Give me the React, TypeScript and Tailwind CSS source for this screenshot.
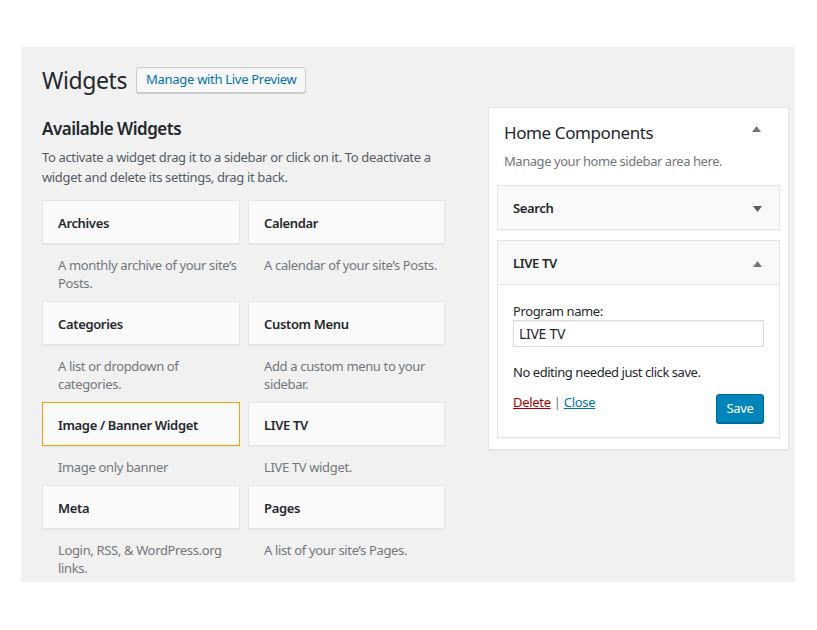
import React from "react";

const widgets: { t: string; d: string[]; active?: boolean }[] = [
  { t: "Archives", d: ["A monthly archive of your site’s", "Posts."] },
  { t: "Calendar", d: ["A calendar of your site’s Posts."] },
  { t: "Categories", d: ["A list or dropdown of", "categories."] },
  { t: "Custom Menu", d: ["Add a custom menu to your", "sidebar."] },
  { t: "Image / Banner Widget", d: ["Image only banner"], active: true },
  { t: "LIVE TV", d: ["LIVE TV widget."] },
  { t: "Meta", d: ["Login, RSS, & WordPress.org", "links."] },
  { t: "Pages", d: ["A list of your site’s Pages."] },
];

function Up() {
  return (
    <svg width="9" height="6" viewBox="0 0 9 6" className="block">
      <path d="M0 6 L4.5 0 L9 6 Z" fill="#72777c" />
    </svg>
  );
}
function Down() {
  return (
    <svg width="9" height="6" viewBox="0 0 9 6" className="block">
      <path d="M0 0 L9 0 L4.5 6 Z" fill="#555d66" />
    </svg>
  );
}

export default function App() {
  return (
    <div
      className="w-[817px] h-[630px] bg-white pt-[47px] pl-[21px] text-[#23282d]"
      style={{ fontFamily: '"Noto Sans", "Open Sans", sans-serif' }}
    >
      <div className="w-[774px] h-[535px] bg-[#f1f1f1] pl-[21px] flex gap-[43px] overflow-hidden">
        {/* left */}
        <div className="w-[403px] pt-[20px]">
          <div className="flex items-center h-[26px]">
            <h1 className="text-[23px] leading-[29px] font-normal tracking-[-0.4px]">Widgets</h1>
            <button className="ml-[9px] h-[26px] px-[9px] border border-[#cccccc] bg-[#f7f7f7] rounded-[3px] text-[13px] text-[#0073aa] tracking-[-0.3px] shadow-[0_1px_0_#cccccc]">
              Manage with Live Preview
            </button>
          </div>
          <h2 className="mt-[24px] text-[17px] leading-[24px] font-semibold tracking-[-0.5px]">Available Widgets</h2>
          <p className="mt-[6px] text-[13px] leading-[20px] text-[#555d66] tracking-[-0.35px]">
            To activate a widget drag it to a sidebar or click on it. To deactivate a widget and delete its settings, drag it back.
          </p>
          <div className="mt-[13px] grid grid-cols-[198px_197px] gap-x-[8px]">
            {widgets.map((w) => (
              <div key={w.t}>
                <div
                  className={
                    "h-[44px] flex items-center pl-[15px] pt-[4px] bg-[#fafafa] border text-[13px] font-semibold tracking-[-0.35px] shadow-[0_1px_1px_rgba(0,0,0,0.04)] " +
                    (w.active ? "border-[#f7a400]" : "border-[#e5e5e5]")
                  }
                >
                  {w.t}
                </div>
                <div className="w-[210px] pt-[12px] pb-[9px] pl-[16px] text-[13px] leading-[18px] text-[#72777c] tracking-[-0.35px] whitespace-nowrap">
                  {w.d.map((l, i) => (
                    <div key={i}>{l}</div>
                  ))}
                </div>
              </div>
            ))}
          </div>
        </div>
        {/* right */}
        <div className="pt-[60px]">
          <div className="w-[301px] bg-white border border-[#e5e5e5] shadow-[0_1px_1px_rgba(0,0,0,0.04)] px-[8px] pb-[11px]">
            <div className="flex items-start justify-between pl-[7px] pr-[19px] pt-[13px]">
              <h2 className="text-[17px] leading-[24px] font-normal tracking-[-0.4px]">Home Components</h2>
              <div className="pt-[5px]"><Up /></div>
            </div>
            <p className="pl-[7px] mt-[6px] text-[13px] leading-[20px] text-[#72777c] tracking-[-0.45px]">
              Manage your home sidebar area here.
            </p>
            <div className="mt-[14px] h-[45px] bg-[#f9f9f9] border border-[#e5e5e5] shadow-[0_1px_1px_rgba(0,0,0,0.04)] flex items-center justify-between pl-[15px] pr-[17px] pt-[2px]">
              <span className="text-[13px] font-semibold tracking-[-0.35px]">Search</span>
              <Down />
            </div>
            <div className="mt-[10px] bg-white border border-[#e5e5e5] shadow-[0_1px_1px_rgba(0,0,0,0.04)]">
              <div className="h-[44px] bg-[#f9f9f9] border-b border-[#e5e5e5] flex items-center justify-between pl-[15px] pr-[17px] pt-[3px]">
                <span className="text-[13px] font-semibold tracking-[-0.35px]">LIVE TV</span>
                <Up />
              </div>
              <div className="px-[15px] pt-[17px] pb-[14px]">
                <div className="text-[13px] leading-[18px] tracking-[-0.4px]">Program name:</div>
                <div className="h-[27px] w-[251px] border border-[#dddddd] shadow-[inset_0_1px_2px_rgba(0,0,0,0.07)] flex items-center pl-[5px] text-[14px] tracking-[-0.3px]">
                  LIVE TV
                </div>
                <div className="mt-[16px] text-[13px] leading-[18px] tracking-[-0.45px]">No editing needed just click save.</div>
                <div className="mt-[12px] flex items-start justify-between">
                  <div className="text-[13px] leading-[18px] tracking-[-0.3px]">
                    <a className="text-[#a00] underline">Delete</a>
                    <span className="text-[#72777c]"> | </span>
                    <a className="text-[#0073aa] underline">Close</a>
                  </div>
                  <button className="mt-[1px] h-[29px] w-[48px] bg-[#0085ba] border border-[#006799] rounded-[3px] text-white text-[13px] tracking-[-0.3px] shadow-[0_1px_0_#006799]">
                    Save
                  </button>
                </div>
              </div>
            </div>
          </div>
        </div>
      </div>
    </div>
  );
}
